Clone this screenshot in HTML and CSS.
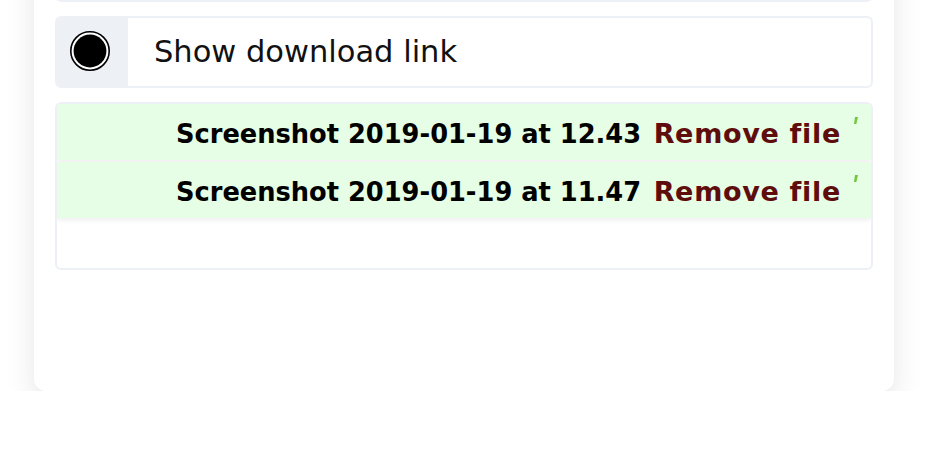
FILE: index.html
```
<!DOCTYPE html>
<html>
<head>
<meta charset="utf-8">
<link rel="stylesheet" href="styles.css">
</head>
<body>
<div class="card">
  <div class="prev-box"></div>
  <div class="option">
    <div class="option-side">
      <svg class="radio" width="40" height="40" viewBox="0 0 40 40">
        <circle cx="20" cy="20" r="19.2" fill="#fff" stroke="#000" stroke-width="1.6"/>
        <circle cx="20" cy="20" r="16.4" fill="#000"/>
      </svg>
    </div>
    <div class="option-label">Show download link</div>
  </div>
  <div class="files">
    <div class="file-row">
      <div class="file-name">Screenshot 2019-01-19 at 12.43</div>
      <div class="file-remove">Remove file</div>
      <svg class="tick" width="4" height="7" viewBox="0 0 4 7"><path d="M1 0 L4 0 L2.3 7 L0 7 Z" fill="#74c63e"/></svg>
    </div>
    <div class="file-row">
      <div class="file-name">Screenshot 2019-01-19 at 11.47.26.png</div>
      <div class="file-remove">Remove file</div>
      <svg class="tick" width="4" height="7" viewBox="0 0 4 7"><path d="M1 0 L4 0 L2.3 7 L0 7 Z" fill="#74c63e"/></svg>
    </div>
  </div>
</div>
</body>
</html>
```
FILE: styles.css
```
html, body {
  margin: 0;
  background: #fff;
}
body {
  font-family: "DejaVu Sans", sans-serif;
  color: #000;
}
.card {
  width: 860px;
  margin: -79px 0 0 34px;
  padding: 21px 21px 121px;
  box-sizing: border-box;
  background: #fff;
  border-radius: 12px;
  box-shadow: 0 12px 30px rgba(0, 0, 0, 0.1);
  display: flex;
  flex-direction: column;
  gap: 14px;
}
.prev-box {
  height: 60px;
  box-sizing: border-box;
  border: 2px solid #edf0f4;
  border-radius: 6px;
}
.option {
  display: flex;
  height: 72px;
  box-sizing: border-box;
  border: 2px solid #edf0f4;
  border-radius: 6px;
  overflow: hidden;
}
.option-side {
  width: 71px;
  background: #edf0f5;
  display: flex;
  align-items: center;
  padding-left: 13px;
  box-sizing: border-box;
}
.radio {
  display: block;
  margin-top: -2px;
}
.option-label {
  display: flex;
  align-items: center;
  padding-left: 26px;
  font-size: 30.5px;
  color: #111;
  padding-bottom: 2px;
}
.files {
  height: 168px;
  box-sizing: border-box;
  border: 2px solid #edf0f4;
  border-radius: 6px;
  overflow: hidden;
  display: flex;
  flex-direction: column;
  gap: 2px;
}
.file-row {
  height: 56px;
  flex: none;
  box-sizing: border-box;
  padding-top: 3px;
  display: flex;
  align-items: center;
  background: #e6fde6;
  box-shadow: 0 2px 5px rgba(0, 0, 0, 0.07);
  font-weight: 700;
  font-size: 25.7px;
  white-space: nowrap;
}
.file-name {
  flex: 1;
  min-width: 0;
  overflow: hidden;
  text-align: right;
  padding-left: 119px;
}
.file-remove {
  margin-left: 14px;
  font-size: 27px;
  letter-spacing: 0.7px;
  color: #5e0c0c;
}
.tick {
  align-self: flex-start;
  margin: 10px 13px 0 13px;
  flex: none;
}
```
